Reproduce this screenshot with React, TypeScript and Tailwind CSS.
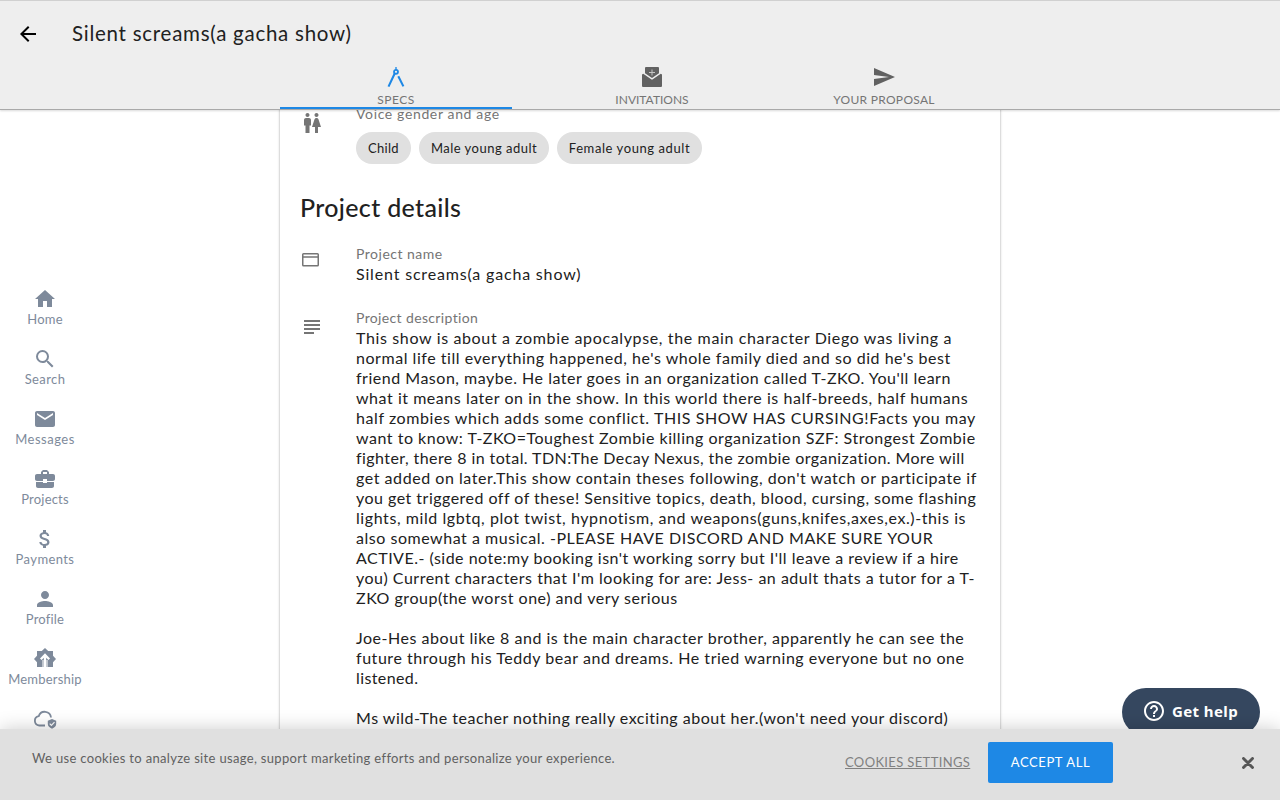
import type { ReactNode } from "react";
import {
  MdArrowBack,
  MdAttachMoney,
  MdBusinessCenter,
  MdEmail,
  MdHelpOutline,
  MdHome,
  MdPerson,
  MdSearch,
  MdSend,
  MdSubject,
  MdWc,
} from "react-icons/md";

function CompassIcon() {
  return (
    <svg width="24" height="24" viewBox="0 0 24 24" fill="none" stroke="currentColor">
      <path d="M12 2v3" strokeWidth="1.300" />
      <circle cx="12" cy="6.800" r="2" strokeWidth="1.800" />
      <path d="M10.700 8.500 4.500 21.600M14.300 11.300 19.400 21.400" strokeWidth="2.100" />
    </svg>
  );
}

function InviteIcon() {
  return (
    <svg width="24" height="24" viewBox="0 0 24 24" fill="currentColor">
      <path d="M2 9.600 3.200 8.700 12 14.700 20.800 8.700 22 9.600V21a1 1 0 0 1-1 1H3a1 1 0 0 1-1-1z" />
      <path d="M6 2h12a1 1 0 0 1 1 1v5.200L12 13 5 8.200V3a1 1 0 0 1 1-1z" />
      <path d="M12 4.500v6M9 7.500h6" stroke="#c4c4c4" strokeWidth="1" />
    </svg>
  );
}

function WindowIcon() {
  return (
    <svg className="mt-1" width="20" height="24" viewBox="0 0 20 24" fill="none" stroke="currentColor">
      <rect x="2.750" y="5.750" width="15.500" height="12" rx="0.800" strokeWidth="1.500" />
      <path d="M3 9h15" strokeWidth="1.500" />
    </svg>
  );
}

function MembershipIcon() {
  return (
    <svg width="24" height="24" viewBox="0 0 24 24">
      <path
        fill="currentColor"
        d="m12 1 3.200 3H20v4.800l3 3.200-3 3.200V20H4v-4.800L1 12l3-3.200V4h4.800z"
      />
      <path d="M9 13h6v8H9z" fill="white" opacity="0.5" />
      <path d="M12 21V8.500M7.800 12.200 12 8l4.200 4.200" fill="none" stroke="white" strokeWidth="2.300" />
    </svg>
  );
}

function CloudShieldIcon() {
  return (
    <svg width="24" height="24" viewBox="0 0 24 24">
      <path
        d="M12 18.500H6.200A4.700 4.700 0 0 1 5.700 9.200 6.300 6.300 0 0 1 18 10.500"
        fill="none"
        stroke="currentColor"
        strokeWidth="1.800"
      />
      <path
        fill="currentColor"
        d="m19 12 4.200 1.800v3c0 2.400-1.700 4-4.200 4.900-2.500-.9-4.200-2.500-4.200-4.900v-3z"
      />
      <path d="m16.700 16.700 1.700 1.700 3.100-3.200" fill="none" stroke="white" strokeWidth="1.200" />
    </svg>
  );
}

const navItems: { label: string; icon: ReactNode; spacing: string }[] = [
  { label: "Home", icon: <MdHome size={24} />, spacing: "tracking-[0.2px]" },
  { label: "Search", icon: <MdSearch size={24} />, spacing: "tracking-[0.4px]" },
  { label: "Messages", icon: <MdEmail size={24} />, spacing: "tracking-[0.5px]" },
  { label: "Projects", icon: <MdBusinessCenter size={24} />, spacing: "tracking-[0.2px]" },
  { label: "Payments", icon: <MdAttachMoney size={24} />, spacing: "tracking-[0.4px]" },
  { label: "Profile", icon: <MdPerson size={24} />, spacing: "tracking-[0.2px]" },
  { label: "Membership", icon: <MembershipIcon />, spacing: "tracking-[0.2px]" },
];

const description: [string, string][] = [
  ["This show is about a zombie apocalypse, the main character Diego was living a", "tracking-[0.64px]"],
  ["normal life till everything happened, he's whole family died and so did he's best", "tracking-[0.54px]"],
  ["friend Mason, maybe. He later goes in an organization called T-ZKO. You'll learn", "tracking-[0.51px]"],
  ["what it means later on in the show. In this world there is half-breeds, half humans", "tracking-[0.54px]"],
  ["half zombies which adds some conflict. THIS SHOW HAS CURSING!Facts you may", "tracking-[0.58px]"],
  ["want to know: T-ZKO=Toughest Zombie killing organization SZF: Strongest Zombie", "tracking-[0.52px]"],
  ["fighter, there 8 in total. TDN:The Decay Nexus, the zombie organization. More will", "tracking-[0.43px]"],
  ["get added on later.This show contain theses following, don't watch or participate if", "tracking-[0.55px]"],
  ["you get triggered off of these! Sensitive topics, death, blood, cursing, some flashing", "tracking-[0.48px]"],
  ["lights, mild lgbtq, plot twist, hypnotism, and weapons(guns,knifes,axes,ex.)-this is", "tracking-[0.58px]"],
  ["also somewhat a musical. -PLEASE HAVE DISCORD AND MAKE SURE YOUR", "tracking-[0.53px]"],
  ["ACTIVE.- (side note:my booking isn't working sorry but I'll leave a review if a hire", "tracking-[0.49px]"],
  ["you) Current characters that I'm looking for are: Jess- an adult thats a tutor for a T-", "tracking-[0.51px]"],
  ["ZKO group(the worst one) and very serious", "tracking-[0.52px]"],
  ["", ""],
  ["Joe-Hes about like 8 and is the main character brother, apparently he can see the", "tracking-[0.53px]"],
  ["future through his Teddy bear and dreams. He tried warning everyone but no one", "tracking-[0.54px]"],
  ["listened.", "tracking-[0.4px]"],
  ["", ""],
  ["Ms wild-The teacher nothing really exciting about her.(won't need your discord)", "tracking-[0.51px]"],
];

function Tab({ label, icon, className }: { label: string; icon: ReactNode; className: string }) {
  return (
    <div className={`flex flex-col items-center border-b-2 ${className}`}>
      <span className="h-6 shrink-0">{icon}</span>
      <span className="mt-[3px] shrink-0 text-[12px] leading-4 text-[#757575]">{label}</span>
    </div>
  );
}

function Field({
  label,
  icon,
  spacing = "tracking-[0.45px]",
  children,
}: {
  label: string;
  icon: ReactNode;
  spacing?: string;
  children: ReactNode;
}) {
  return (
    <div className="flex">
      <div className="w-14 shrink-0 text-[#757575]">{icon}</div>
      <div className="min-w-0">
        <div className={`text-[14px] leading-5 text-[#757575] ${spacing}`}>{label}</div>
        {children}
      </div>
    </div>
  );
}

export default function App() {
  return (
    <div className="flex h-[800px] w-[1280px] flex-col overflow-hidden bg-white font-['Lato',sans-serif] text-[#212121]">
      <header className="z-10 flex h-[109px] shrink-0 flex-col border-t border-[#d0d0d0] bg-[#eeeeee] shadow-[0_1px_0_#a9a9a9,0_2px_2px_rgba(0,0,0,0.15)]">
        <div className="flex h-16 items-center pl-4">
          <MdArrowBack size={24} className="mt-0.5 text-black" />
          <h1 className="ml-8 text-[20.500px] leading-6 tracking-[0.74px]">Silent screams(a gacha show)</h1>
        </div>
        <nav className="flex h-11 pl-[280px]">
          <Tab label="SPECS" icon={<CompassIcon />} className="w-[232px] border-[#1e88e5] tracking-[0.5px] text-[#1e88e5]" />
          <Tab label="INVITATIONS" icon={<InviteIcon />} className="w-[280px] border-transparent text-[#616161]" />
          <Tab label="YOUR PROPOSAL" icon={<MdSend size={24} />} className="w-[184px] border-transparent tracking-[0.3px] text-[#616161]" />
        </nav>
      </header>

      <div className="flex h-[620px] shrink-0 overflow-hidden">
        <aside className="w-[90px] shrink-0 pt-[178px] text-[#7e8a9b]">
          {navItems.map((item) => (
            <div key={item.label} className="flex h-[60px] flex-col items-center">
              {item.icon}
              <span className={`text-[13px] leading-4 ${item.spacing}`}>{item.label}</span>
            </div>
          ))}
          <div className="flex justify-center">
            <CloudShieldIcon />
          </div>
        </aside>

        <main className="ml-[189px] h-[900px] w-[722px] shrink-0 border-x border-[#dddddd] pl-5 shadow-[0_0_2px_rgba(0,0,0,0.12)]">
          <div className="-mt-[5px]">
            <Field label="Voice gender and age" spacing="tracking-[0.64px]" icon={<MdWc size={24} className="mt-[7px]" />}>
              <div className="mt-2 flex gap-2 text-[13px]">
                <span className="flex h-8 w-[55px] items-center justify-center rounded-full bg-[#e0e0e0] pt-0.5 tracking-[0.3px]">Child</span>
                <span className="flex h-8 w-[130px] items-center justify-center rounded-full bg-[#e0e0e0] pt-0.5 tracking-[0.48px]">Male young adult</span>
                <span className="flex h-8 w-[145px] items-center justify-center rounded-full bg-[#e0e0e0] pt-0.5 tracking-[0.58px]">Female young adult</span>
              </div>
            </Field>
          </div>
          <h2 className="mt-[27px] mb-[21px] text-[25px] leading-8 font-medium tracking-[0.34px]">Project details</h2>
          <Field label="Project name" spacing="tracking-[0.5px]" icon={<WindowIcon />}>
            <div className="text-[16px] leading-5 tracking-[0.83px]">Silent screams(a gacha show)</div>
          </Field>
          <div className="mt-6">
            <Field label="Project description" spacing="tracking-[0.36px]" icon={<MdSubject size={24} className="mt-[7px]" />}>
              <div className="text-[16px] leading-5 whitespace-nowrap">
                {description.map(([line, spacing], i) => (
                  <div key={i} className={`h-5 ${spacing}`}>
                    {line}
                  </div>
                ))}
              </div>
            </Field>
          </div>
        </main>

        <div className="flex flex-1 items-end justify-end pr-5">
          <button className="-mb-[7px] flex h-12 w-[138px] items-center gap-1.5 rounded-full bg-[#35475f] pb-0.5 pl-5 font-['Noto_Sans',sans-serif] text-[15px] font-bold tracking-[0.4px] text-white">
            <MdHelpOutline size={24} />
            Get help
          </button>
        </div>
      </div>

      <footer className="z-10 flex h-[71px] shrink-0 items-center bg-[#e0e0e0] pb-1 pl-8 shadow-[0_0_18px_rgba(0,0,0,0.2)]">
        <p className="w-[813px] pb-2 text-[13px] tracking-[0.33px] text-[#616161]">
          We use cookies to analyze site usage, support marketing efforts and personalize your experience.
        </p>
        <a className="w-[126px] text-[13px] tracking-[0.36px] whitespace-nowrap text-[#808080] underline">COOKIES SETTINGS</a>
        <button className="ml-[17px] h-[41px] w-[125px] rounded-[2px] bg-[#1e88e5] text-[13px] tracking-[0.6px] text-white">ACCEPT ALL</button>
        <svg className="ml-[129px]" width="12" height="12" viewBox="0 0 12 12">
          <path d="M1.500 1.500 10.500 10.500M10.500 1.500 1.500 10.500" stroke="#565656" strokeWidth="2.900" strokeLinecap="round" />
        </svg>
      </footer>
    </div>
  );
}
